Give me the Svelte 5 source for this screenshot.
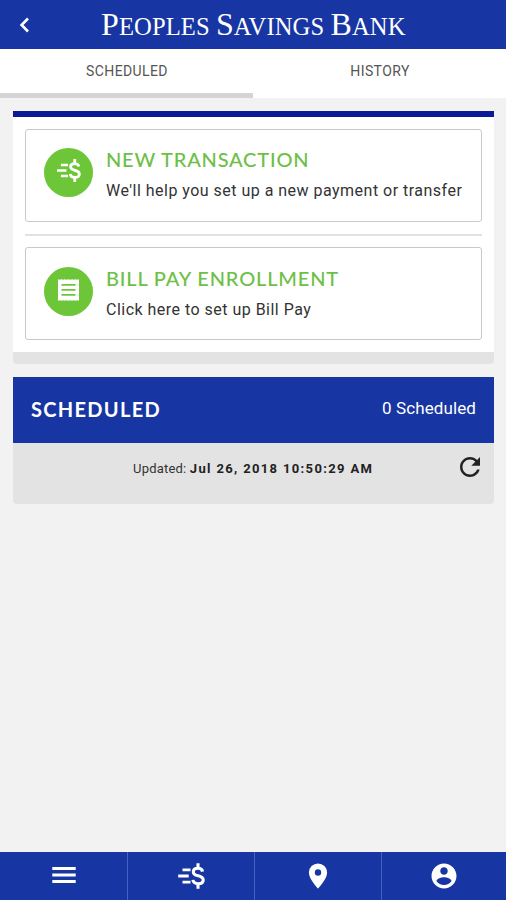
<script>
  const actions = [
    { title: 'NEW TRANSACTION', text: "We'll help you set up a new payment or transfer", icon: 'transfer' },
    { title: 'BILL PAY ENROLLMENT', text: 'Click here to set up Bill Pay', icon: 'bill' }
  ];
  const nav = ['menu', 'transfer', 'place', 'account'];
</script>

{#snippet icon(name)}
  {#if name === 'menu'}
    <svg width="24" height="24" viewBox="0 0 24 24"><path d="M.3 3.1h23.4v2.9H.3zM.3 9.6h23.4v2.9H.3zM.3 16.1h23.4V19H.3z" /></svg>
  {:else if name === 'transfer'}
    <svg width="28" height="28" viewBox="0 0 28 28" class="line">
      <path d="M5.5 7.8h8M1.2 14h10.5M5.5 20.2h8" stroke-width="2.8" />
      <path d="M25.6 9.6C25.2 7.5 23.6 6.3 21 6.3c-2.9 0-4.7 1.4-4.7 3.6 0 5.2 9.9 2.6 9.9 8 0 2.4-2 3.8-5 3.8-3.1 0-5-1.4-5.3-3.8M21 1.2v5M21 21.5v5.3" stroke-width="3.1" />
    </svg>
  {:else if name === 'place'}
    <svg width="26" height="26" viewBox="0 0 26 26"><path fill-rule="evenodd" d="M13 .4a9.1 9.1 0 0 0-9.1 9.1C3.9 16.3 13 25.6 13 25.6s9.1-9.3 9.1-16.1A9.1 9.1 0 0 0 13 .4zm0 12.3a3.2 3.2 0 1 1 0-6.4 3.2 3.2 0 0 1 0 6.4z" /></svg>
  {:else if name === 'account'}
    <svg width="30" height="30" viewBox="0 0 24 24"><path d="M12 2C6.48 2 2 6.48 2 12s4.48 10 10 10 10-4.48 10-10S17.52 2 12 2zm0 3c1.66 0 3 1.34 3 3s-1.34 3-3 3-3-1.34-3-3 1.34-3 3-3zm0 14.2c-2.5 0-4.71-1.28-6-3.22.03-1.99 4-3.08 6-3.08 1.99 0 5.97 1.09 6 3.08-1.29 1.94-3.5 3.22-6 3.22z" /></svg>
  {:else if name === 'bill'}
    <svg width="21" height="22" viewBox="0 0 21 22"><path fill-rule="evenodd" d="M0 .3l1.7.5L3.5.3l1.7.5L7 .3l1.7.5 1.8-.5 1.8.5 1.7-.5 1.8.5 1.7-.5 1.8.5L21 .3v21.4l-1.7-.5-1.8.5-1.7-.5-1.8.5-1.7-.5-1.8.5-1.8-.5-1.7.5-1.8-.5-1.7.5-1.7-.5-1.8.5zM3.5 5v1.8h14V5zm0 5v1.8h14V10zm0 5v1.8h14V15z" /></svg>
  {/if}
{/snippet}

<div class="app">
  <header>
    <svg class="back" width="12" height="18" viewBox="0 0 12 18"><path d="M10 2.5 3.6 9l6.4 6.5" /></svg>
    <h1><b>P</b>EOPLES <b>S</b>AVINGS <b>B</b>ANK</h1>
  </header>

  <div class="tabs">
    <div class="tab active"><span>SCHEDULED</span></div>
    <div class="tab"><span>HISTORY</span></div>
  </div>

  <main>
    <section class="actions">
      {#each actions as a, i}
        {#if i}<hr />{/if}
        <div class="action {a.icon}">
          <div class="disc">{@render icon(a.icon)}</div>
          <div class="copy">
            <h2>{a.title}</h2>
            <p>{a.text}</p>
          </div>
        </div>
      {/each}
    </section>

    <section class="scheduled">
      <div class="bar">
        <h3>SCHEDULED</h3>
        <span>0 Scheduled</span>
      </div>
      <div class="updated">
        <p>Updated: <b>Jul 26, 2018 10:50:29 AM</b></p>
        <svg width="30" height="30" viewBox="0 0 24 24"><path d="M17.65 6.35C16.2 4.9 14.21 4 12 4c-4.42 0-7.99 3.58-7.99 8s3.57 8 7.99 8c3.73 0 6.84-2.55 7.73-6h-2.08c-.82 2.33-3.04 4-5.65 4-3.31 0-6-2.69-6-6s2.69-6 6-6c1.66 0 3.14.69 4.22 1.78L13 11h7V4l-2.35 2.35z" /></svg>
      </div>
    </section>
  </main>

  <nav>
    {#each nav as n}
      <div class="item">{@render icon(n)}</div>
    {/each}
  </nav>
</div>

<style>
  .app {
    display: flex;
    flex-direction: column;
    height: 900px;
    overflow: hidden;
    background: #f2f2f2;
    font-family: Roboto, sans-serif;
    color: #333;
  }
  h1, h2, h3, p { margin: 0; font-weight: 400; white-space: nowrap; }
  svg { display: block; flex: none; fill: #fff; }
  .line { fill: none; stroke: #fff; }

  header {
    display: flex;
    align-items: center;
    height: 49px;
    padding-left: 18px;
    background: #1735a3;
    color: #fff;
    flex: none;
  }
  .back { fill: none; stroke: #fff; stroke-width: 2.6; }
  h1 {
    margin-left: 71px;
    padding-top: 2px;
    font: 24.6px/49px "Liberation Serif", serif;
    letter-spacing: .1px;
  }
  h1 b { font-size: 32px; font-weight: 400; }

  .tabs { display: flex; height: 49px; background: #fff; flex: none; }
  .tab {
    box-sizing: border-box;
    width: 253px;
    padding-left: 1px;
    text-align: center;
    font-size: 14px;
    letter-spacing: .4px;
    line-height: 44px;
    color: #555;
  }
  .active { border-bottom: 5px solid #d4d4d4; }

  main { flex: 1; padding: 13px 12px 0 13px; }
  .actions {
    box-sizing: border-box;
    height: 253px;
    padding: 12px;
    border-top: 6px solid #0a1a94;
    border-bottom: 12px solid #e3e3e3;
    border-radius: 0 0 4px 4px;
    background: #fff;
  }
  .action {
    box-sizing: border-box;
    display: flex;
    height: 93px;
    padding: 18px 0 0 18px;
    border: 1px solid #c9c9c9;
    border-radius: 3px;
  }
  .action.bill { padding-top: 19px; }
  hr { height: 2px; margin: 12px 0 11px; border: 0; background: #e1e1e1; }
  .disc {
    display: flex;
    align-items: center;
    justify-content: center;
    width: 49px;
    height: 49px;
    border-radius: 50%;
    background: #6dc638;
  }
  .bill .disc svg { margin-bottom: 4px; }
  .transfer .disc svg { width: 25px; height: 25px; margin-bottom: 4px; }
  .copy { margin-left: 13px; }
  h2 { margin-top: -2px; font: 500 20px/26px Lato, sans-serif; letter-spacing: .8px; color: #6dc046; }
  p { margin-top: 2px; font-size: 16px; line-height: 34px; color: #333; letter-spacing: .48px; }
  .bill h2 { letter-spacing: .83px; }

  .scheduled { margin-top: 13px; }
  .bar {
    display: flex;
    justify-content: space-between;
    height: 66px;
    padding: 0 18px;
    background: #1735a3;
    color: #fff;
    line-height: 63px;
    font-size: 17px;
    letter-spacing: .1px;
  }
  h3 { font: 700 20px/64px Lato, sans-serif; letter-spacing: 1.3px; }
  .updated {
    display: flex;
    height: 61px;
    border-radius: 0 0 4px 4px;
    background: #e3e3e3;
  }
  .updated p { margin: 0 0 0 120px; width: 322px; line-height: 52px; font-size: 13px; letter-spacing: .2px; }
  .updated b { font-weight: 700; letter-spacing: 1.35px; color: #222; }
  .updated svg { fill: #222; margin-top: 9px; }

  nav {
    display: flex;
    height: 48px;
    background: #1735a3;
    flex: none;
  }
  .item {
    box-sizing: border-box;
    display: flex;
    width: 127px;
    align-items: center;
    justify-content: center;
    border-right: 1px solid #4660bd;
  }
  .item:first-child { width: 128px; }
  .item:last-child { width: 124px; border-right: 0; }
</style>
